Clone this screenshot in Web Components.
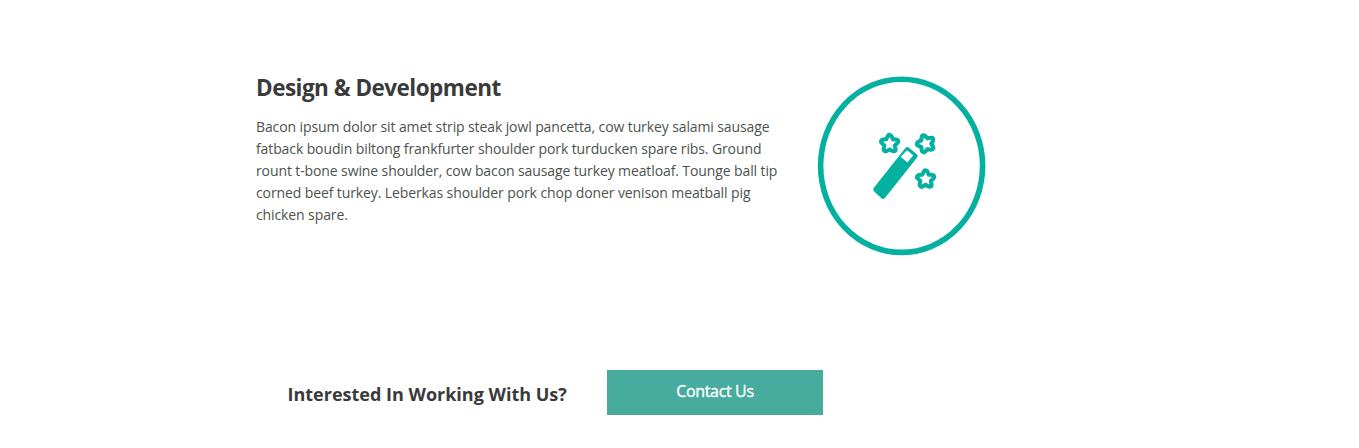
<!DOCTYPE html>
<html lang="en"><head><meta charset="utf-8"><title>Design &amp; Development</title>
<style>body{margin:0;background:#fff;font-family:"Open Sans",sans-serif}</style></head>
<body>
<service-section>
<service-copy><span slot="title">Design &amp; Development</span>Bacon ipsum dolor sit amet strip steak jowl pancetta, cow turkey salami sausage<br>fatback boudin biltong frankfurter shoulder pork turducken spare ribs. Ground<br>rount t-bone swine shoulder, cow bacon sausage turkey meatloaf. Tounge ball tip<br>corned beef turkey. Leberkas shoulder pork chop doner venison meatball pig<br>chicken spare.</service-copy>
<wand-badge></wand-badge>
</service-section>
<contact-bar><span slot="prompt">Interested In Working With Us?</span><contact-button>Contact Us</contact-button></contact-bar>
<script>
const define=(name,html)=>customElements.define(name,class extends HTMLElement{
  constructor(){super();this.attachShadow({mode:"open"}).innerHTML=html;}
});
define("service-section",`<style>:host{display:flex;align-items:flex-start;box-sizing:border-box;height:370px;padding:70px 0 0 256px}</style><slot></slot>`);
define("service-copy",`<style>:host{display:block;width:556px;flex:none}
h2{margin:0 0 10px;font-size:22.5px;line-height:36px;letter-spacing:-.52px;font-weight:700;color:#3a3a3a;white-space:nowrap}
p{margin:0;font-size:14px;line-height:22px;letter-spacing:-.108px;color:#4c534d;white-space:nowrap}</style>
<h2><slot name="title"></slot></h2><p><slot></slot></p>`);
define("wand-badge",`<style>:host{display:block;margin:6px 0 0 5px}svg{display:block}</style>
<svg width="169" height="180" viewBox="817 76 169 180" fill="none" stroke="#04b1a0" stroke-linejoin="round">
<defs><g id="star"><path stroke-width="7.6" d="M0-6.2 1.8-2.6 5.9-2 2.9.9 3.6 5 0 3.1-3.6 5-2.9.9-5.9-2-1.8-2.6Z"/><path fill="#fff" stroke="none" d="M0-6.2 1.8-2.6 5.9-2 2.9.9 3.6 5 0 3.1-3.6 5-2.9.9-5.9-2-1.8-2.6Z"/></g></defs>
<ellipse cx="901.6" cy="165.8" rx="81" ry="86.6" stroke-width="5.6"/>
<path fill="#04b1a0" stroke-width="5.4" d="M907.3 149.8 914.8 156.1 883 196.1 876 189.5Z"/>
<path fill="#fff" stroke="none" d="M907 150.2 913.2 155.3 907.4 162.5 900.8 156.8Z"/>
<use href="#star" transform="translate(889.6 143.8) scale(1.08)"/><use href="#star" transform="translate(925.8 143.8) rotate(-18) scale(1.08)"/><use href="#star" transform="translate(925.6 179.2) scale(1.08)"/></svg>`);
define("contact-bar",`<style>:host{display:flex;padding-left:287.5px}.prompt{width:319.5px;font-size:18px;font-weight:700;line-height:48px;color:#3a3a3a;white-space:nowrap}</style><div class="prompt"><slot name="prompt"></slot></div><slot></slot>`);
define("contact-button",`<style>:host{display:block}button{display:block;width:216px;height:45px;border:0;padding:0 0 2px;background:#47ab9d;color:#fff;font:16px/43px "Open Sans",sans-serif;letter-spacing:-.36px;-webkit-text-stroke:.35px #fff}</style><button><slot></slot></button>`);
</script>
</body></html>
